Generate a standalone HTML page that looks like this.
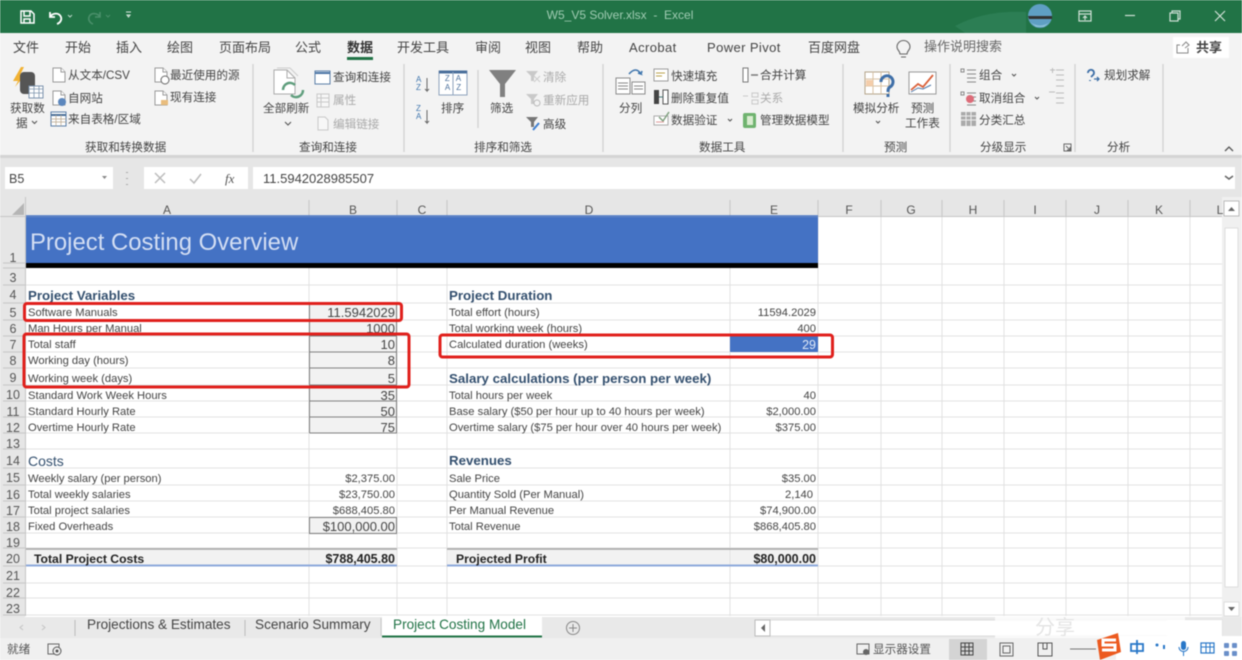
<!DOCTYPE html>
<html><head><meta charset="utf-8"><style>
html,body{margin:0;padding:0;background:#fff}
#p{position:relative;width:1242px;height:660px;overflow:hidden;background:#fff;font-family:"Liberation Sans","Noto Sans CJK SC",sans-serif;filter:blur(.45px)}
#p svg{position:absolute;left:0;top:0}
.b{position:absolute}
.t,.r,.c{position:absolute;white-space:nowrap;line-height:16px;height:16px;font-size:11.6px;color:#444;margin-top:1px}
.c{transform:translateX(-50%)}
.v{font-size:11.2px}
.tab{font-size:13px;color:#444}
.g{color:#aaa}
.h{font-size:13.3px;font-weight:bold;color:#34506f}
.n{font-size:12.5px;color:#555}
.bd{font-weight:bold;font-size:12.2px;color:#222}
.k{font-size:12px;color:#555}
.inp{font-size:13px;color:#444}
.s{font-size:13.6px;color:#444}
</style></head><body><div id="p">
<div class="b" style="left:0;top:0;width:1242px;height:33px;background:#217346"></div>
<div class="b" style="left:0;top:33px;width:1242px;height:122px;background:#f3f3f3"></div>
<div class="b" style="left:0;top:155px;width:1242px;height:42px;background:#e6e6e6"></div>
<div class="b" style="left:0;top:155px;width:1242px;height:3px;background:#d4d4d4"></div>
<div class="b" style="left:5px;top:167px;width:108px;height:22px;background:#fff"></div>
<div class="b" style="left:144px;top:167px;width:104px;height:22px;background:#fff"></div>
<div class="b" style="left:253px;top:167px;width:982px;height:22px;background:#fff"></div>
<div class="b" style="left:0;top:197px;width:1222px;height:20px;background:#e6e6e6"></div>
<div class="b" style="left:0;top:197px;width:25px;height:420px;background:#e6e6e6"></div>
<div class="b" style="left:1222px;top:197px;width:20px;height:420px;background:#f0f0f0"></div>
<div class="b" style="left:0;top:617px;width:1242px;height:21px;background:#e9e9e9"></div>
<div class="b" style="left:0;top:638px;width:1242px;height:22px;background:#f0f0f0"></div>

<!-- inputs and totals -->
<div class="b" style="left:309px;top:304px;width:87px;height:16px;background:#f2f2f2"></div>
<div class="b" style="left:309px;top:320px;width:87px;height:113px;background:#f2f2f2"></div>
<div class="b" style="left:309px;top:518px;width:87px;height:16px;background:#f2f2f2"></div>
<div class="b" style="left:26px;top:549px;width:371px;height:17px;background:#f2f2f2"></div>
<div class="b" style="left:447px;top:549px;width:371px;height:17px;background:#f2f2f2"></div>

<svg width="1242" height="660" fill="none">
<!-- gridlines -->
<g stroke="#e2e2e2" stroke-width="1">
<path d="M26 285H1222M26 303H1222M26 320H1222M26 336H1222M26 352H1222M26 368H1222M26 385H1222M26 401H1222M26 417H1222M26 433H1222M26 449H1222M26 468H1222M26 485H1222M26 501H1222M26 517H1222M26 533H1222M26 548H1222M26 566H1222M26 583H1222M26 598H1222M26 615H1222M818 264H1222"/>
<path d="M309 268V616M397 268V616M447 268V616M730 268V616M818 217V616M881 217V616M942 217V616M1004 217V616M1066 217V616M1128 217V616M1190 217V616"/>
</g>
<rect x="26" y="217" width="792" height="46" fill="#4472c4"/>
<rect x="26" y="263" width="792" height="5" fill="#000"/>
<rect x="730" y="336" width="88" height="16" fill="#4472c4"/>
<!-- input borders -->
<g stroke="#7f7f7f" stroke-width="1">
<path d="M309.5 304V433M396.5 304V433M309.5 320H397M309.5 336H397M309.5 352H397M309.5 368H397M309.5 385H397M309.5 401H397M309.5 417H397M309.5 433H397"/>
<rect x="309.5" y="517.5" width="87" height="16"/>
</g>
<path d="M26 549H397M447 549H818" stroke="#a6a6a6" stroke-width="1.5"/>
<path d="M26 565.5H397M447 565.5H818" stroke="#8ea9db" stroke-width="2"/>
<!-- header separators -->
<g stroke="#c6c6c6"><path d="M309 200V216M397 200V216M447 200V216M730 200V216M818 200V216M881 200V216M942 200V216M1004 200V216M1066 200V216M1128 200V216M1190 200V216M25.5 197V616"/>
<path d="M3 285H25M3 303H25M3 320H25M3 336H25M3 352H25M3 368H25M3 385H25M3 401H25M3 417H25M3 433H25M3 449H25M3 468H25M3 485H25M3 501H25M3 517H25M3 533H25M3 548H25M3 566H25M3 583H25M3 598H25M3 615H25M3 263H25M3 268H25"/></g>
<path d="M12 215H24V203Z" fill="#b5b5b5"/>
<path d="M0 216.5H1222" stroke="#c6c6c6"/>
<path d="M26 216H818" stroke="#4472c4" stroke-width="1.5"/>
<!-- ribbon separators -->
<g stroke="#d0d0d0" stroke-width="1.2"><path d="M253 64V152M404 64V152M603 64V152M843 64V152M950 64V152M1075 64V152M1163 64V152M478 70V128"/></g>
<!-- title bar icons -->
<g stroke="#fff" stroke-width="1.5"><path d="M21 11h10l3 3v9H21ZM24 11v5h6v-5M24 23v-4h6v4" fill="#217346"/></g>
<path d="M50 12v5h5M50 17c2-4 9-5 11 0 1 3-1 6-4 7" stroke="#fff" stroke-width="1.8"/>
<path d="M68 15l2 2 2-2" stroke="#b9d4c5"/>
<path d="M100 12v5h-5M100 17c-2-4-9-5-11 0-1 3 1 6 4 7" stroke="#4a8f6a" stroke-width="1.6"/>
<path d="M106 15l2 2 2-2" stroke="#4a8f6a"/>
<path d="M126 12h5M127 15h3l-1.500 2z" stroke="#d9e8df"/>
<g stroke="#cfe0d6" stroke-width="1.2">
<rect x="1079" y="11" width="12" height="10"/><path d="M1079 14H1091M1085 20v-4M1083 18l2-2 2 2"/>
<path d="M1125 15.500H1135"/><rect x="1170" y="13" width="8" height="8"/><path d="M1172 13v-2h8v8h-2"/>
<path d="M1215 11l10 10M1225 11l-10 10"/>
</g>
<path d="M955 26Q985 10 1026 12L1026 33H965Z" fill="#2c7e54"/>
<circle cx="1040" cy="16" r="12" fill="#5f9fc4"/><path d="M1028 16H1052V19H1029Z" fill="#333"/><path d="M1030 22Q1040 29 1050 22L1044 27H1036Z" fill="#8cc0d8"/>
<path d="M897 47a6.500 6.500 0 1 1 13 0c0 3-3 4-3 7h-7c0-3-3-4-3-7ZM901 57h5" stroke="#666" stroke-width="1.1"/>
<!-- 获取数据 -->
<path d="M21 67l-8 14h5l-3 6 10-12h-5l4-8z" fill="#f2b233"/>
<rect x="20" y="72" width="15" height="22" rx="4" fill="#555"/>
<rect x="29" y="86" width="14" height="12" fill="#fff" stroke="#7c93ad"/><path d="M29 89H43M34 86V98M39 86V98M29 93H43" stroke="#7c93ad" stroke-width=".8"/>
<!-- doc small icons -->
<g stroke="#9a9a9a" fill="#fff"><path d="M53 68h8l4 4v10H53Z"/><path d="M53 91h8l4 4v10H53Z"/><path d="M155 68h8l4 4v10h-12Z"/><path d="M155 91h8l4 4v10h-12Z"/><path d="M61 68v4h4M61 91v4h4M163 68v4h4M163 91v4h4"/></g>
<circle cx="62" cy="102" r="4" fill="#5c87bd"/><circle cx="165" cy="80" r="4" fill="#fff" stroke="#666"/><rect x="161" y="100" width="7" height="5" fill="#e9bd7d"/>
<g stroke="#5b7fa8" fill="#fff"><rect x="51" y="112" width="15" height="14"/></g><path d="M51 115H66" stroke="#4a6f98" stroke-width="2"/><path d="M51 119H66M51 122H66M56 115V126M61 115V126" stroke="#b9a58a" stroke-width=".7"/>
<!-- refresh -->
<path d="M274 70h13l8 8v16h-21Z" fill="#fff" stroke="#aaa"/><path d="M277 68h13l8 8" stroke="#ccc"/>
<path d="M287 70v8h8" stroke="#aaa"/><path d="M283 90a7 7 0 0 1 12-5M303 90a7 7 0 0 1-12 5" stroke="#5f9e7d" stroke-width="2.500"/>
<rect x="315" y="71" width="15" height="13" fill="#fff" stroke="#5b7fa8"/><path d="M315 73H330" stroke="#4a74a5" stroke-width="2"/>
<g stroke="#c8c8c8" fill="#f7f7f7"><rect x="317" y="94" width="12" height="13"/><path d="M317 98H329M317 102H329M321 94V107"/><path d="M318 117h7l3 3v10H318Z"/></g>
<!-- sort -->
<rect x="439" y="71" width="28" height="24" fill="#fff" stroke="#8ea3bd"/><path d="M439 72H467" stroke="#4a6f9b" stroke-width="3"/><path d="M453 72V95" stroke="#8ea3bd"/>
<path d="M427 78v13l-2-2M427 91l2-2M427 110v13l-2-2M427 123l2-2" stroke="#666"/>
<!-- filter -->
<path d="M489 70H516L505 84V97H500V84Z" fill="#808080"/>
<path d="M526 71h12l-4 5v5h-3v-5Z" fill="#c9c9c9"/><path d="M534 76l6 6m0-6l-6 6" stroke="#ccc"/>
<path d="M526 94h12l-4 5v5h-3v-5Z" fill="#c9c9c9"/><circle cx="537" cy="103" r="3" stroke="#bbb"/>
<path d="M526 117h12l-4 5v5h-3v-5Z" fill="#777"/><path d="M533 130l6-7" stroke="#3f7fd0" stroke-width="2"/>
<!-- split columns -->
<path d="M616 78h14v16h-14ZM632 82h13v12h-13Z" fill="#fff" stroke="#8b8b8b"/><path d="M618 83h10M618 86h10M618 89h10M634 86h9M634 89h9" stroke="#888"/><path d="M629 74q7-8 12 0l-3-1m3 1 1-3" stroke="#3e75ad" stroke-width="1.600"/>
<rect x="654" y="69" width="14" height="12" fill="#fff" stroke="#9c9c9c"/><path d="M656 73h9M656 76h6" stroke="#b9a04a"/>
<rect x="654" y="90" width="5" height="14" fill="#444"/><rect x="663" y="90" width="5" height="14" fill="#fff" stroke="#555"/><path d="M659 97h4" stroke="#477"/>
<rect x="654" y="116" width="14" height="9" fill="#fff" stroke="#aaa"/><path d="M659 117l4 4 6-9" stroke="#7fa07f" stroke-width="1.500"/><path d="M656 122h8" stroke="#d99"/>
<rect x="743" y="68" width="5" height="14" fill="#fff" stroke="#777"/><path d="M751 75h7" stroke="#777" stroke-width="1.500"/>
<path d="M743 96h5M752 93h6v4h-6ZM752 100h6v4h-6Z" stroke="#c8c8c8"/>
<rect x="743" y="113" width="13" height="15" rx="2" fill="#6fb36f"/><rect x="747" y="116" width="6" height="9" fill="#d9ecd0"/>
<!-- what-if -->
<rect x="865" y="72" width="24" height="22" fill="#fff" stroke="#b5a48a"/><path d="M865 79H889M865 86H889M873 72V94M881 72V94" stroke="#d8c2a4"/><rect x="866" y="80" width="7" height="6" fill="#f4cdaa"/>
<path d="M881 82a6 6 0 1 1 9 5c-2 1-2 3-2 5M888 94v3" stroke="#3f6fa8" stroke-width="3"/>
<rect x="909" y="72" width="27" height="22" fill="#fff" stroke="#999"/><path d="M911 90l7-6 5 3 10-12" stroke="#d9603a" stroke-width="1.800"/><path d="M911 92l7-4 5 1 8-4" stroke="#4c77a8"/>
<!-- outline -->
<g stroke="#888"><path d="M961 69h3v3h-3ZM967 70h9M967 74h9M967 78h9M967 82h9"/><path d="M961 92h3v3h-3ZM967 93h9M967 97h9M967 101h9M967 105h9"/></g>
<circle cx="970" cy="99" r="4" fill="#dd6b78"/>
<rect x="961" y="112" width="15" height="14" fill="#aaa"/><path d="M961 116h15M961 120h15M966 112v14M971 112v14" stroke="#eee"/>
<path d="M1050 70h5M1052.500 68v5M1056 70h8M1056 75h8M1056 80h8M1056 86h8M1049 92h6M1056 93h8M1056 98h8M1056 103h8" stroke="#bbb"/>
<path d="M1088 73a3 3 0 1 1 5 2l-2 2M1090 80v1" stroke="#3e6fa7" stroke-width="1.800"/><path d="M1094 79h5m-2-2 2 2-2 2" stroke="#3e6fa7" stroke-width="1.300"/>
<path d="M1064 144h7v7h-7ZM1066 146l4 4m0-3v3h-3" stroke="#666"/>
<path d="M1225 151l4-4 4 4" stroke="#555" stroke-width="1.300"/>
<!-- chevrons -->
<g stroke="#555" stroke-width="1.100"><path d="M32 121l2.500 2.500 2.500-2.500M285 122l3 3 3-3M728 119l2 2 2-2M1012 74l2 2 2-2M1035 97l2 2 2-2M876 121l2 2 2-2"/></g>
<path d="M102 176h5l-2.500 3z" fill="#888"/>
<path d="M127 172v1M127 178v1M127 184v1" stroke="#aaa" stroke-width="2"/>
<path d="M155 173l10 10M165 173l-10 10" stroke="#bbb" stroke-width="1.500"/>
<path d="M190 179l4 4 7-9" stroke="#bbb" stroke-width="1.500"/>
<path d="M1225 176l4 3 4-3" stroke="#666" stroke-width="1.500"/>
<!-- scrollbar -->
<rect x="1224" y="217" width="15" height="398" fill="#f0f0f0"/><rect x="1225" y="228" width="13" height="359" fill="#fff" stroke="#ddd"/>
<rect x="1224" y="201" width="15" height="15" fill="#fff" stroke="#bbb"/><path d="M1228 211l3.500-4 3.500 4z" fill="#666"/>
<rect x="1224" y="602" width="15" height="14" fill="#fff" stroke="#ddd"/><path d="M1228 607h7l-3.500 4z" fill="#666"/>
<!-- tabs -->
<path d="M75 620V636M245 620V636" stroke="#bbb"/>
<path d="M381 618V636" stroke="#c8c8c8"/>
<rect x="382" y="617" width="160" height="20" fill="#fff"/><path d="M382 636.500H542" stroke="#217346" stroke-width="2"/>
<path d="M23 625l-3 2.500 3 2.500M42 625l3 2.500-3 2.500" stroke="#c4c4c4"/>
<circle cx="573" cy="628" r="6.500" stroke="#888"/><path d="M569 628h8M573 624v8" stroke="#888"/>
<rect x="755" y="620" width="467" height="16" fill="#fff" stroke="#ddd"/>
<rect x="755" y="620" width="15" height="16" fill="#fff" stroke="#bbb"/><path d="M765 624l-4 4 4 4z" fill="#666"/>
<!-- status -->
<rect x="48" y="644" width="11" height="10" stroke="#666"/><circle cx="57" cy="651" r="4" fill="#f0f0f0" stroke="#555"/><circle cx="57" cy="651" r="1.500" fill="#555"/>
<rect x="857" y="644" width="12" height="10" stroke="#666"/><circle cx="866" cy="652" r="3" fill="#666"/>
<rect x="949" y="639" width="38" height="21" fill="#d4d4d4"/>
<rect x="961" y="643" width="12" height="12" stroke="#444"/><path d="M961 647h12M961 651h12M965 643v12M969 643v12" stroke="#444"/>
<rect x="1000" y="643" width="13" height="13" stroke="#666"/><rect x="1003" y="646" width="7" height="7" stroke="#666"/>
<rect x="1038" y="643" width="14" height="13" stroke="#555"/><path d="M1043 643v6h4v-6" stroke="#555"/>
<path d="M1070 649H1096" stroke="#777"/>
<!-- watermark smear -->
<path d="M995 617h190v21h-190Z" fill="#fff" opacity=".75"/>
<rect x="1167" y="620" width="55" height="16" fill="#fff"/>
<!-- sogou -->
<rect x="1116" y="636" width="126" height="24" fill="#fff"/>
<path d="M1097 640L1118 633L1121 652L1100 660Z" fill="#ec5a1f"/>
<path d="M1116 640h-13v5h12v5h-13" stroke="#fff" stroke-width="3"/>
<g stroke="#2877c8" stroke-width="1.800"><rect x="1131" y="644" width="12" height="7"/><path d="M1137 640v14"/><rect x="1201" y="643" width="13" height="10" stroke-width="1.200"/><path d="M1201 647h13M1206 643v10M1210 643v10" stroke-width="1"/></g>
<circle cx="1157" cy="645" r="1.500" fill="#2877c8"/><path d="M1164 645v4" stroke="#2877c8" stroke-width="2"/>
<rect x="1181" y="641" width="5" height="9" rx="2.500" fill="#2877c8"/><path d="M1179 647c0 6 9 6 9 0M1183.500 652v4" stroke="#2877c8"/>
<g fill="#6a8fc9"><rect x="1224" y="643" width="5" height="5" rx="1"/><rect x="1232" y="643" width="5" height="5" rx="1"/><rect x="1224" y="651" width="5" height="5" rx="1"/><rect x="1232" y="651" width="5" height="5" rx="1"/></g>
</svg>

<!-- title -->
<span class="c" style="left:620px;top:6px;color:#9fcbb2;font-size:12px">W5_V5 Solver.xlsx &nbsp;-&nbsp; Excel</span>
<!-- ribbon tabs -->
<span class="t tab" style="left:13px;top:39px">文件</span><span class="t tab" style="left:65px;top:39px">开始</span><span class="t tab" style="left:116px;top:39px">插入</span><span class="t tab" style="left:167px;top:39px">绘图</span><span class="t tab" style="left:219px;top:39px">页面布局</span><span class="t tab" style="left:295px;top:39px">公式</span><span class="t tab" style="left:347px;top:39px;font-weight:bold;color:#333">数据</span>
<div class="b" style="left:347px;top:57px;width:26px;height:3px;background:#217346"></div>
<span class="t tab" style="left:397px;top:39px">开发工具</span><span class="t tab" style="left:475px;top:39px">审阅</span><span class="t tab" style="left:525px;top:39px">视图</span><span class="t tab" style="left:577px;top:39px">帮助</span><span class="t tab" style="left:629px;top:39px;letter-spacing:.4px">Acrobat</span><span class="t tab" style="left:707px;top:39px;letter-spacing:.4px">Power Pivot</span><span class="t tab" style="left:808px;top:39px">百度网盘</span><span class="t tab" style="left:924px;top:38px;color:#666">操作说明搜索</span>
<div class="b" style="left:1173px;top:37px;width:56px;height:21px;background:#fff"></div>
<span class="t" style="left:1196px;top:39px;font-size:13px;font-weight:bold;color:#444">共享</span>
<svg width="1242" height="660" fill="none"><path d="M1180 45h-3v8h11v-5M1182 46l4-4 3 3-4 3" stroke="#888"/></svg>
<!-- ribbon labels -->
<span class="t" style="left:10px;top:100px">获取数</span><span class="t" style="left:16px;top:115px">据</span>
<span class="t" style="left:68px;top:67px">从文本/CSV</span><span class="t" style="left:68px;top:90px">自网站</span><span class="t" style="left:68px;top:111px">来自表格/区域</span>
<span class="t" style="left:170px;top:67px">最近使用的源</span><span class="t" style="left:170px;top:89px">现有连接</span>
<span class="t" style="left:263px;top:100px">全部刷新</span>
<span class="t" style="left:333px;top:69px">查询和连接</span><span class="t g" style="left:333px;top:92px">属性</span><span class="t g" style="left:333px;top:116px">编辑链接</span>
<span class="t" style="left:85px;top:139px">获取和转换数据</span><span class="t" style="left:299px;top:139px">查询和连接</span>
<span class="t" style="left:441px;top:100px">排序</span><span class="t" style="left:490px;top:100px">筛选</span>
<span class="t g" style="left:543px;top:69px">清除</span><span class="t g" style="left:543px;top:92px">重新应用</span><span class="t" style="left:543px;top:116px">高级</span>
<span class="t" style="left:474px;top:139px">排序和筛选</span>
<span class="t" style="left:619px;top:100px">分列</span>
<span class="t" style="left:671px;top:68px">快速填充</span><span class="t" style="left:671px;top:90px">删除重复值</span><span class="t" style="left:671px;top:112px">数据验证</span>
<span class="t" style="left:760px;top:67px">合并计算</span><span class="t g" style="left:760px;top:90px">关系</span><span class="t" style="left:760px;top:112px">管理数据模型</span>
<span class="t" style="left:699px;top:139px">数据工具</span>
<span class="t" style="left:853px;top:100px">模拟分析</span><span class="t" style="left:911px;top:100px">预测</span><span class="t" style="left:905px;top:115px">工作表</span>
<span class="t" style="left:884px;top:139px">预测</span>
<span class="t" style="left:979px;top:67px">组合</span><span class="t" style="left:979px;top:90px">取消组合</span><span class="t" style="left:979px;top:112px">分类汇总</span>
<span class="t" style="left:980px;top:139px">分级显示</span>
<span class="t" style="left:1104px;top:67px">规划求解</span><span class="t" style="left:1107px;top:139px">分析</span>
<span class="c" style="left:453px;top:70px;font-size:8px;color:#4a6f9b;letter-spacing:6px;margin-left:3px">ZA</span>
<span class="c" style="left:453px;top:79px;font-size:8px;color:#4a6f9b;letter-spacing:6px;margin-left:3px">AZ</span>
<span class="t" style="left:416px;top:75px;font-size:8px;line-height:8px;color:#3e75ad;width:8px;white-space:normal">A Z</span>
<span class="t" style="left:416px;top:104px;font-size:8px;line-height:8px;color:#3e75ad;width:8px;white-space:normal">Z A</span>
<!-- formula bar -->
<span class="t" style="left:9px;top:170px;font-size:12.5px;color:#444">B5</span>
<span class="t" style="left:225px;top:170px;font-size:13px;font-style:italic;font-family:'Liberation Serif',serif;color:#555">fx</span>
<span class="t" style="left:263px;top:170px;font-size:13px;color:#444">11.5942028985507</span>
<!-- column heads -->
<span class="c k" style="left:167px;top:201px">A</span><span class="c k" style="left:353px;top:201px">B</span><span class="c k" style="left:422px;top:201px">C</span><span class="c k" style="left:589px;top:201px">D</span><span class="c k" style="left:774px;top:201px">E</span><span class="c k" style="left:849px;top:201px">F</span><span class="c k" style="left:911px;top:201px">G</span><span class="c k" style="left:973px;top:201px">H</span><span class="c k" style="left:1035px;top:201px">I</span><span class="c k" style="left:1097px;top:201px">J</span><span class="c k" style="left:1159px;top:201px">K</span><span class="c k" style="left:1220px;top:201px">L</span>
<!-- row heads -->
<span class="c n" style="left:13px;top:249px">1</span><span class="c n" style="left:13px;top:269px">3</span><span class="c n" style="left:13px;top:286px">4</span><span class="c n" style="left:13px;top:304px">5</span><span class="c n" style="left:13px;top:320px">6</span><span class="c n" style="left:13px;top:336px">7</span><span class="c n" style="left:13px;top:352px">8</span><span class="c n" style="left:13px;top:369px">9</span><span class="c n" style="left:13px;top:386px">10</span><span class="c n" style="left:13px;top:403px">11</span><span class="c n" style="left:13px;top:419px">12</span><span class="c n" style="left:13px;top:435px">13</span><span class="c n" style="left:13px;top:452px">14</span><span class="c n" style="left:13px;top:469px">15</span><span class="c n" style="left:13px;top:486px">16</span><span class="c n" style="left:13px;top:502px">17</span><span class="c n" style="left:13px;top:518px">18</span><span class="c n" style="left:13px;top:534px">19</span><span class="c n" style="left:13px;top:550px">20</span><span class="c n" style="left:13px;top:567px">21</span><span class="c n" style="left:13px;top:584px">22</span><span class="c n" style="left:13px;top:600px">23</span>
<!-- banner -->
<span class="t" style="left:30px;top:227px;height:30px;line-height:30px;font-size:23.9px;color:#d3def3">Project Costing Overview</span>
<!-- left block -->
<span class="t h" style="left:28px;top:287px">Project Variables</span>
<span class="t v" style="left:28px;top:304px">Software Manuals</span>
<span class="t v" style="left:28px;top:320px">Man Hours per Manual</span>
<span class="t v" style="left:28px;top:336px">Total staff</span>
<span class="t v" style="left:28px;top:352px">Working day (hours)</span>
<span class="t v" style="left:28px;top:370px">Working week (days)</span>
<span class="t v" style="left:28px;top:387px">Standard Work Week Hours</span>
<span class="t v" style="left:28px;top:403px">Standard Hourly Rate</span>
<span class="t v" style="left:28px;top:419px">Overtime Hourly Rate</span>
<span class="t h" style="left:28px;top:452px;font-weight:normal;font-size:14px">Costs</span>
<span class="t v" style="left:28px;top:470px">Weekly salary (per person)</span>
<span class="t v" style="left:28px;top:486px">Total weekly salaries</span>
<span class="t v" style="left:28px;top:502px">Total project salaries</span>
<span class="t v" style="left:28px;top:518px">Fixed Overheads</span>
<span class="t bd" style="left:34px;top:550px">Total Project Costs</span>
<span class="r inp" style="right:847px;top:304px">11.5942029</span>
<span class="r inp" style="right:847px;top:320px">1000</span>
<span class="r inp" style="right:847px;top:336px">10</span>
<span class="r inp" style="right:847px;top:352px">8</span>
<span class="r inp" style="right:847px;top:370px">5</span>
<span class="r inp" style="right:847px;top:387px">35</span>
<span class="r inp" style="right:847px;top:403px">50</span>
<span class="r inp" style="right:847px;top:419px">75</span>
<span class="r v" style="right:847px;top:470px">$2,375.00</span>
<span class="r v" style="right:847px;top:486px">$23,750.00</span>
<span class="r v" style="right:847px;top:502px">$688,405.80</span>
<span class="r inp" style="right:847px;top:518px">$100,000.00</span>
<span class="r bd" style="right:847px;top:550px;font-size:12.5px">$788,405.80</span>
<!-- right block -->
<span class="t h" style="left:449px;top:287px">Project Duration</span>
<span class="t v" style="left:449px;top:304px">Total effort (hours)</span>
<span class="t v" style="left:449px;top:320px">Total working week (hours)</span>
<span class="t v" style="left:449px;top:336px">Calculated duration (weeks)</span>
<span class="t h" style="left:449px;top:370px">Salary calculations (per person per week)</span>
<span class="t v" style="left:449px;top:387px">Total hours per week</span>
<span class="t v" style="left:449px;top:403px">Base salary ($50 per hour up to 40 hours per week)</span>
<span class="t v" style="left:449px;top:419px">Overtime salary ($75 per hour over 40 hours per week)</span>
<span class="t h" style="left:449px;top:452px">Revenues</span>
<span class="t v" style="left:449px;top:470px">Sale Price</span>
<span class="t v" style="left:449px;top:486px">Quantity Sold (Per Manual)</span>
<span class="t v" style="left:449px;top:502px">Per Manual Revenue</span>
<span class="t v" style="left:449px;top:518px">Total Revenue</span>
<span class="t bd" style="left:456px;top:550px">Projected Profit</span>
<span class="r v" style="right:426px;top:304px">11594.2029</span>
<span class="r v" style="right:426px;top:320px">400</span>
<span class="r" style="right:426px;top:336px;font-size:12.5px;color:#dfe8f7">29</span>
<span class="r v" style="right:426px;top:387px">40</span>
<span class="r v" style="right:426px;top:403px">$2,000.00</span>
<span class="r v" style="right:426px;top:419px">$375.00</span>
<span class="r v" style="right:426px;top:470px">$35.00</span>
<span class="r v" style="right:429px;top:486px">2,140</span>
<span class="r v" style="right:426px;top:502px">$74,900.00</span>
<span class="r v" style="right:426px;top:518px">$868,405.80</span>
<span class="r bd" style="right:426px;top:550px;font-size:12.5px">$80,000.00</span>
<!-- sheet tabs -->
<span class="t s" style="left:87px;top:616px">Projections &amp; Estimates</span>
<span class="t s" style="left:255px;top:616px">Scenario Summary</span>
<span class="t s" style="left:393px;top:616px;color:#217346">Project Costing Model</span>
<span class="t" style="left:7px;top:641px;color:#555">就绪</span>
<span class="t" style="left:873px;top:641px;color:#555">显示器设置</span>
<span class="t" style="left:1035px;top:615px;font-size:20px;line-height:24px;height:24px;color:#e4e4e4">分享</span>
<svg width="1242" height="660" fill="none">
<g stroke="#e0201c" stroke-width="3"><rect x="24.500" y="303.500" width="377" height="17" rx="2.500"/><rect x="24" y="334" width="385" height="53" rx="2.500"/><rect x="440" y="335" width="392.500" height="22" rx="2.500"/></g>
</svg>
</div></body></html>
